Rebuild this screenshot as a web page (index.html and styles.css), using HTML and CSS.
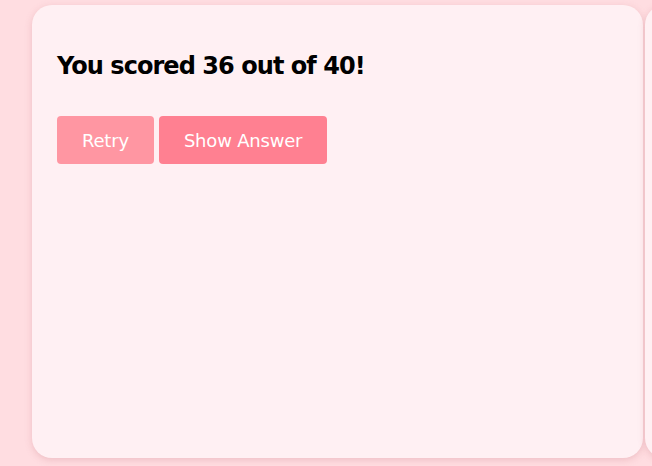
FILE: index.html
```html
<!DOCTYPE html>
<html lang="en">
<head>
<meta charset="utf-8">
<title>Quiz result</title>
<link rel="stylesheet" href="styles.css">
</head>
<body>
<div class="track">
  <section class="card">
    <h2 class="score">You scored 36 out of 40!</h2>
    <div class="actions">
      <button class="btn btn-retry">Retry</button>
      <button class="btn btn-answer">Show Answer</button>
    </div>
  </section>
  <section class="card"></section>
</div>
</body>
</html>
```
FILE: styles.css
```css
html, body {
  margin: 0;
  padding: 0;
  background: #ffdde1;
  font-family: "DejaVu Sans", sans-serif;
}
.track {
  display: flex;
  gap: 2px;
  padding: 5px 0 8px 32px;
  width: 652px;
  height: 466px;
  box-sizing: border-box;
  overflow: hidden;
}
.card {
  flex: 0 0 611px;
  height: 453px;
  box-sizing: border-box;
  background: #fff0f3;
  border-radius: 20px;
  box-shadow: 0 2px 7px rgba(200, 120, 130, 0.3);
  padding: 46px 25px;
}
.score {
  margin: 0 0 35px;
  font-size: 24px;
  letter-spacing: -0.95px;
  font-weight: bold;
  color: #000;
  line-height: 30px;
}
.actions {
  display: flex;
  gap: 5px;
}
.btn {
  height: 48px;
  padding: 0 25px;
  border: none;
  border-radius: 4px;
  color: #fff;
  font-family: inherit;
  font-size: 18px;
  letter-spacing: -0.2px;
}
.btn-retry { background: #ff96a2; }
.btn-answer { background: #ff8091; }
```
